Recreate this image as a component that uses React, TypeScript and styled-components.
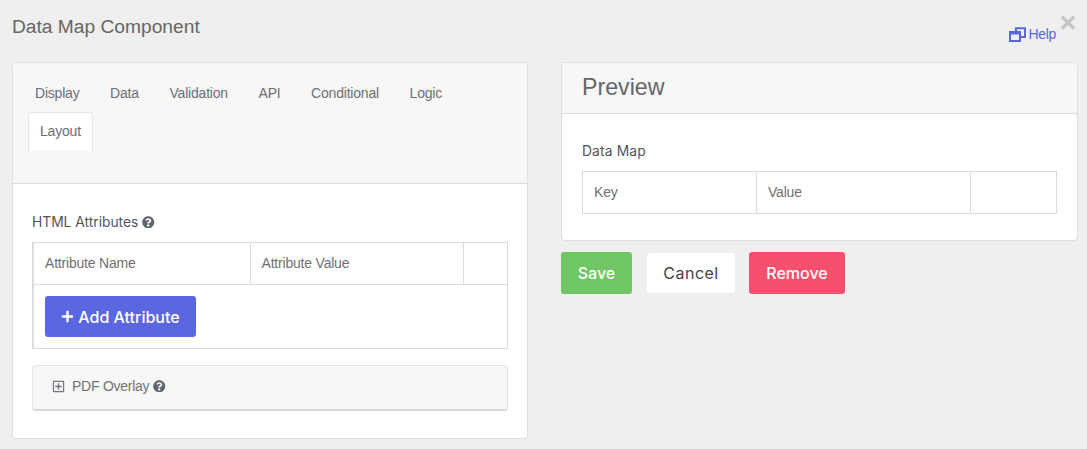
import React from "react";
import styled, { createGlobalStyle } from "styled-components";
import { FaPlus, FaQuestionCircle, FaRegPlusSquare } from "react-icons/fa";

const Global = createGlobalStyle`
  html, body { margin: 0; padding: 0; background: #efefef; }
  body { font-family: "Liberation Sans", Arial, sans-serif; color: #666; overflow: hidden; }
  * { box-sizing: border-box; }
`;

const Page = styled.div`
  width: 1087px;
  height: 449px;
  padding: 0 9px 0 12px;
  display: flex;
  flex-direction: column;
  position: relative;
`;
const Header = styled.div`
  height: 62px;
  display: flex;
  justify-content: space-between;
`;
const Title = styled.h4`
  margin: 16px 0 0;
  font-size: 19.2px;
  line-height: 22px;
  font-weight: 400;
  color: #666;
`;
const HelpLink = styled.a`
  display: flex;
  align-items: center;
  gap: 2px;
  height: 16px;
  margin: 26px 22px 0 0;
  font-size: 14px;
  letter-spacing: -0.3px;
  color: #5a67e0;
`;
const Close = styled.span`
  position: absolute;
  right: 11px;
  top: 9px;
  font-size: 28px;
  line-height: 28px;
  font-weight: 700;
  color: #c4c4c4;
`;
const Columns = styled.div`
  display: grid;
  grid-template-columns: 516px 517px;
  column-gap: 33px;
  align-items: start;
`;
const Card = styled.section`
  background: #fff;
  border: 1px solid #dfdfdf;
  border-radius: 4px;
  overflow: hidden;
`;
const TabsHeader = styled.div`
  height: 121px;
  padding: 10px 15px 0;
  background: #f7f7f7;
  border-bottom: 1px solid #dcdcdc;
`;
const Tabs = styled.ul`
  list-style: none;
  margin: 0;
  padding: 0;
  display: flex;
  flex-wrap: wrap;
`;
const Tab = styled.li<{ $active?: boolean }>`
  height: 39px;
  padding: ${(p) => (p.$active ? "0 11px" : "0 23.6px 0 7px")};
  font-size: 14px;
  letter-spacing: -0.2px;
  line-height: ${(p) => (p.$active ? 36 : 40)}px;
  color: #6c6f78;
  background: ${(p) => (p.$active ? "#fff" : "transparent")};
  border: ${(p) => (p.$active ? "1px solid #e4e4e4" : "0")};
  border-bottom: 0;
  border-radius: 4px 4px 0 0;
`;
const CardBody = styled.div`
  padding: 28px 19px 27px;
`;
const Label = styled.div`
  display: flex;
  align-items: center;
  gap: 4px;
  height: 20px;
  margin-bottom: 10px;
  font-family: Inter, "Liberation Sans", sans-serif;
  font-size: 13.8px;
  font-weight: 400;
  color: #4f5560;
`;
const HelpIcon = styled(FaQuestionCircle)`
  width: 12.5px;
  height: 12.5px;
  color: #5f6772;
`;
const Grid = styled.table`
  width: 100%;
  border-collapse: collapse;
  table-layout: fixed;
  border: 2px solid #dcdcdc;
  border-width: 1px 1px 1px 2px;
  font-size: 14px;
  letter-spacing: -0.2px;
  color: #6f6f6f;
`;
const Cell = styled.td<{ $w?: number }>`
  height: 42px;
  padding: 0 11px 2px;
  border: 1px solid #dcdcdc;
  width: ${(p) => (p.$w ? `${p.$w}px` : "auto")};
  font-weight: 400;
  text-align: left;
`;
const AddCell = styled.td`
  height: 64px;
  padding: 0 11px;
`;
const Button = styled.button<{ $bg: string; $fg?: string }>`
  height: 42px;
  padding: 0;
  border: 0;
  border-radius: 3px;
  background: ${(p) => p.$bg};
  color: ${(p) => p.$fg ?? "#fff"};
  font-family: Inter, "Liberation Sans", sans-serif;
  font-size: 16px;
  font-weight: 500;
  display: inline-flex;
  align-items: center;
  justify-content: center;
`;
const AddButton = styled(Button)`
  width: 151px;
  height: 41px;
  gap: 4px;
`;
const Panel = styled.div`
  margin-top: 16px;
  height: 46px;
  display: flex;
  align-items: center;
  gap: 4px;
  padding: 0 0 3px 19px;
  background: #f7f7f7;
  border: 1px solid #e3e3e3;
  border-bottom: 2px solid #d7d7dc;
  border-radius: 4px;
  font-size: 14px;
  letter-spacing: -0.25px;
  color: #737373;
`;
const PlusBox = styled(FaRegPlusSquare)`
  width: 13px;
  height: 13px;
  margin-right: 3px;
  color: #6f7680;
`;
const PreviewHeader = styled.div`
  height: 51px;
  padding-left: 20px;
  background: #f7f7f7;
  border-bottom: 1px solid #dcdcdc;
  font-size: 23.2px;
  line-height: 48px;
  color: #666;
`;
const PreviewBody = styled.div`
  padding: 27px 20px 26px;
`;
const DataMapLabel = styled(Label)`
  font-size: 13.8px;
  letter-spacing: 0.15px;
`;
const PlainGrid = styled(Grid)`
  border-width: 1px;
`;
const Actions = styled.div`
  display: flex;
  align-items: center;
  margin-top: 11px;
`;
const Save = styled(Button)`
  width: 71px;
  margin-right: 15px;
`;
const Cancel = styled(Button)`
  width: 88px;
  height: 40px;
  margin-right: 14px;
  font-weight: 400;
  letter-spacing: 0.5px;
`;
const Remove = styled(Button)`
  width: 96px;
`;

const RestoreIcon = () => (
  <svg width="17" height="15" viewBox="0 0 17 15" fill="none" stroke="currentColor" aria-hidden="true">
    <path d="M7 4V1.2H16V10H11.5" strokeWidth="2" />
    <rect x="1" y="5" width="10" height="9" strokeWidth="2" />
    <path d="M1 6.2H11" strokeWidth="2.6" />
  </svg>
);

export default function App() {
  return (
    <Page>
      <Global />
      <Header>
        <Title>Data Map Component</Title>
        <HelpLink>
          <RestoreIcon />
          Help
        </HelpLink>
      </Header>
      <Close>×</Close>
      <Columns>
        <Card>
          <TabsHeader>
            <Tabs>
              <Tab>Display</Tab>
              <Tab>Data</Tab>
              <Tab>Validation</Tab>
              <Tab>API</Tab>
              <Tab>Conditional</Tab>
              <Tab>Logic</Tab>
              <Tab $active>Layout</Tab>
            </Tabs>
          </TabsHeader>
          <CardBody>
            <Label>
              HTML Attributes <HelpIcon />
            </Label>
            <Grid>
              <tbody>
                <tr>
                  <Cell as="th" $w={217}>Attribute Name</Cell>
                  <Cell as="th" $w={213}>Attribute Value</Cell>
                  <Cell as="th" />
                </tr>
                <tr>
                  <AddCell colSpan={3}>
                    <AddButton $bg="#5a67e0">
                      <FaPlus size={13} />
                      Add Attribute
                    </AddButton>
                  </AddCell>
                </tr>
              </tbody>
            </Grid>
            <Panel>
              <PlusBox />
              PDF Overlay
              <HelpIcon />
            </Panel>
          </CardBody>
        </Card>
        <div>
          <Card>
            <PreviewHeader>Preview</PreviewHeader>
            <PreviewBody>
              <DataMapLabel>Data Map</DataMapLabel>
              <PlainGrid>
                <tbody>
                  <tr>
                    <Cell as="th" $w={174}>Key</Cell>
                    <Cell as="th" $w={214}>Value</Cell>
                    <Cell as="th" />
                  </tr>
                </tbody>
              </PlainGrid>
            </PreviewBody>
          </Card>
          <Actions>
            <Save $bg="#70c564">Save</Save>
            <Cancel $bg="#fff" $fg="#444">Cancel</Cancel>
            <Remove $bg="#f5516f">Remove</Remove>
          </Actions>
        </div>
      </Columns>
    </Page>
  );
}
